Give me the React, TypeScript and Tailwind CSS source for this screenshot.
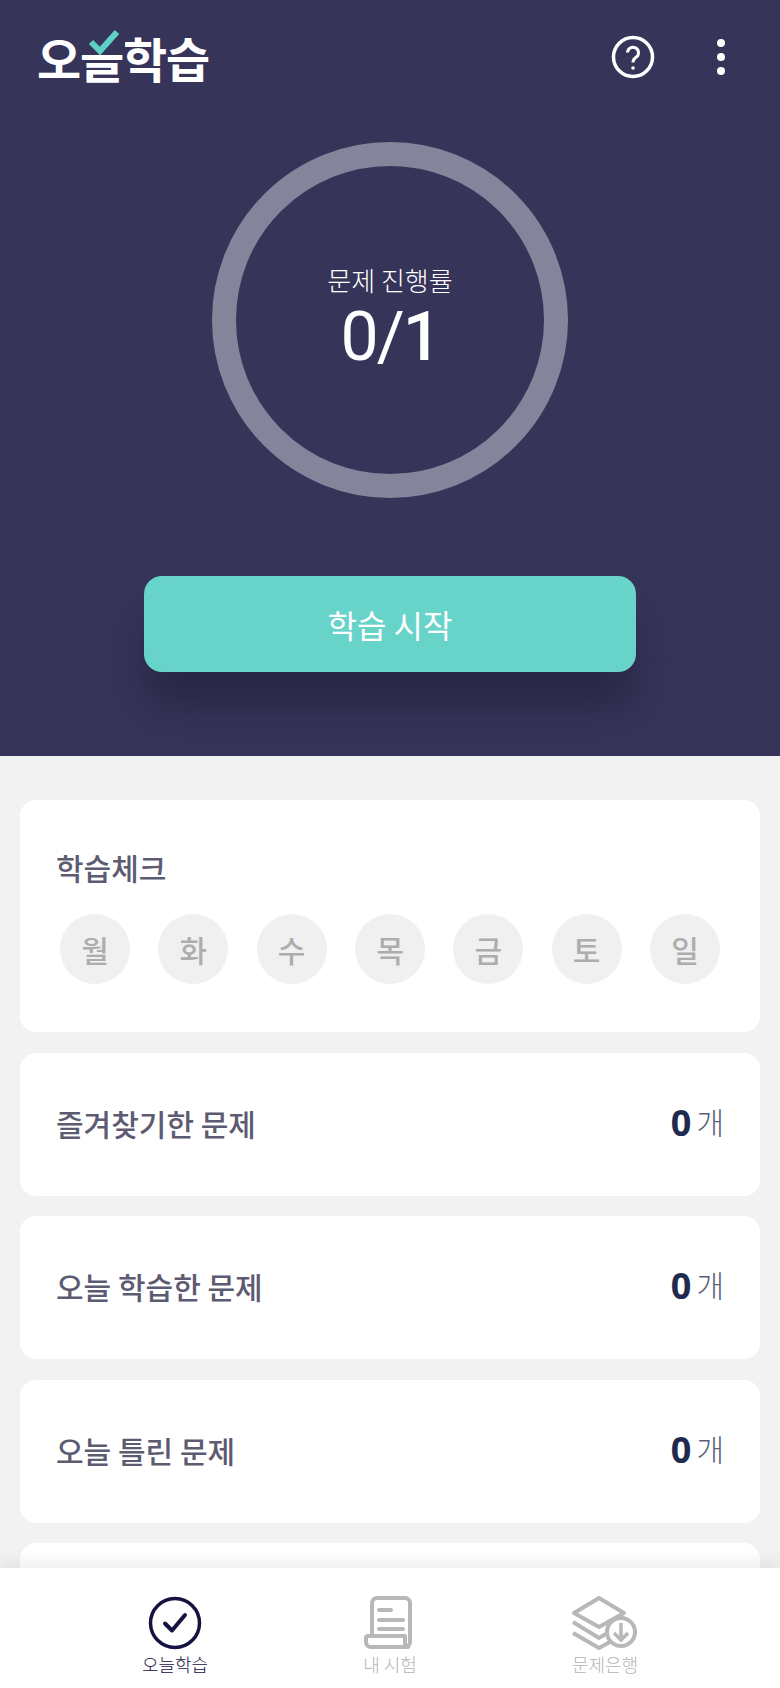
const days = ['월', '화', '수', '목', '금', '토', '일'];
const rows = ['즐겨찾기한 문제', '오늘 학습한 문제', '오늘 틀린 문제'];

function Logo() {
  return (
    <div className="relative flex items-center text-white font-bold text-[48px] leading-[56px] tracking-[-1.2px] ml-[37px]">
      <span>오늘학습</span>
      <svg className="absolute left-[46px] top-[-2px]" width="42" height="28" viewBox="0 0 42 28">
        <rect x="0" y="0" width="42" height="26" fill="#363458" />
        <path d="M8 15 L17 24 L34 5" fill="none" stroke="#5fd0c5" strokeWidth="6" />
      </svg>
    </div>
  );
}

function HelpIcon() {
  return (
    <svg width="44" height="44" viewBox="0 0 44 44" fill="none" stroke="#fff">
      <circle cx="22" cy="22" r="19.5" strokeWidth="3.5" />
      <path d="M16.5 17.5 a5.5 5.5 0 1 1 8.8 4.6 c-2.3 1.6 -3.3 2.6 -3.3 5.4" strokeWidth="3" />
      <circle cx="22" cy="33" r="1.8" fill="#fff" stroke="none" />
    </svg>
  );
}

function CheckIcon() {
  return (
    <svg width="54" height="54" viewBox="0 0 54 54" fill="none" stroke="#14123f">
      <circle cx="27" cy="27" r="24.5" strokeWidth="3.5" />
      <path d="M17 27.5 L24 34.5 L37 19" strokeWidth="4" strokeLinecap="round" strokeLinejoin="round" />
    </svg>
  );
}

function ScrollIcon() {
  return (
    <svg width="54" height="54" viewBox="0 0 54 54" fill="none" stroke="#b8b8b8" strokeWidth="4" strokeLinecap="round">
      <path d="M9 39 V7 a5 5 0 0 1 5 -5 H42 a5 5 0 0 1 5 5 V46 a5 5 0 0 1 -5 5 H42" />
      <path d="M5 40 H42 V47 a4 4 0 0 0 3 4 H8 a5 5 0 0 1 -5 -5 V42 a2 2 0 0 1 2 -2 Z" strokeLinejoin="round" />
      <path d="M16 14 H28 M16 24 H40 M16 33 H40" strokeWidth="4" />
    </svg>
  );
}

function StackIcon() {
  return (
    <svg width="68" height="56" viewBox="0 0 68 56" fill="none" stroke="#b8b8b8" strokeWidth="4">
      <path d="M28 3 L53 18 L28 32 L3 18 Z" strokeLinejoin="round" />
      <path d="M2 27 L28 43 L38 37 M2 38 L28 53 L39 47" />
      <circle cx="50" cy="37" r="14" fill="#fff" strokeWidth="4" />
      <path d="M50 28 V45 M43 38 L50 45 L57 38" strokeWidth="3.5" />
    </svg>
  );
}

export default function App() {
  return (
    <div className="w-[780px] h-[1688px] flex flex-col overflow-hidden bg-[#f2f2f2] font-['Noto_Sans_CJK_KR','Noto_Sans',sans-serif]">
      <header className="h-[756px] shrink-0 bg-[#363458] flex flex-col">
        <div className="flex items-center h-[56px] mt-[29px]">
          <Logo />
          <div className="ml-auto flex items-center">
            <HelpIcon />
            <div className="flex flex-col gap-[6px] ml-[62px] mr-[55px]">
              <span className="w-2 h-2 rounded-full bg-white" />
              <span className="w-2 h-2 rounded-full bg-white" />
              <span className="w-2 h-2 rounded-full bg-white" />
            </div>
          </div>
        </div>
        <div className="mt-[57px] mx-auto w-[356px] h-[356px] rounded-full border-[24px] border-[#86849b] flex flex-col items-center text-white">
          <div className="mt-[98px] text-[26px] leading-[32px] font-light">문제 진행률</div>
          <div className="mt-[3px] text-[68px] leading-[76px] tracking-[-2px] font-['Roboto',sans-serif]">
            0/<span className="font-medium">1</span>
          </div>
        </div>
        <button className="mt-[78px] mx-auto w-[492px] h-[96px] rounded-[18px] bg-[#67d3c9] text-white text-[32px] shadow-[0_36px_40px_-6px_rgba(30,27,55,0.6)]">
          학습 시작
        </button>
      </header>
      <main className="flex-1 min-h-0 overflow-hidden px-5 pt-[44px] flex flex-col gap-[20.5px]">
        <section className="shrink-0 h-[232px] rounded-[16px] bg-white pt-[45px] px-[36px]">
          <h2 className="text-[30px] leading-[44px] font-medium text-[#5d5b72]">학습체크</h2>
          <div className="mt-[25px] flex justify-between pl-[4px] pr-[4px]">
            {days.map((d) => (
              <div key={d} className="w-[70px] h-[70px] rounded-full bg-[#f0f0f0] flex items-center justify-center text-[30px] font-medium text-[#adadad]">
                {d}
              </div>
            ))}
          </div>
        </section>
        {rows.map((r) => (
          <section key={r} className="shrink-0 h-[143px] rounded-[16px] bg-white flex items-center justify-between px-[36px]">
            <span className="text-[30px] leading-[44px] mb-[3px] font-medium text-[#5d5b72]">{r}</span>
            <span className="flex items-baseline gap-[5px] text-[#5d5f7a] text-[30px] font-light leading-[44px] mb-[3px]">
              <b className="font-['Noto_Sans',sans-serif] text-[36px] font-bold text-[#1f2a4f]">0</b>
              <span className="-translate-y-[2px]">개</span>
            </span>
          </section>
        ))}
        <section className="shrink-0 h-[143px] rounded-[16px] bg-white" />
      </main>
      <nav className="relative h-[120px] shrink-0 bg-white shadow-[0_-6px_16px_rgba(0,0,0,0.07)]">
        <div className="w-[645px] mx-auto grid grid-cols-3 pt-[27px]">
          {[
            { icon: <CheckIcon />, label: '오늘학습', color: 'text-[#14123f]' },
            { icon: <ScrollIcon />, label: '내 시험', color: 'text-[#b4b4b4]' },
            { icon: <StackIcon />, label: '문제은행', color: 'text-[#b4b4b4]' },
          ].map((t) => (
            <div key={t.label} className="flex flex-col items-center">
              <div className="h-[56px] flex items-center">{t.icon}</div>
              <span className={`text-[18px] leading-[26px] font-light ${t.color}`}>{t.label}</span>
            </div>
          ))}
        </div>
      </nav>
    </div>
  );
}
